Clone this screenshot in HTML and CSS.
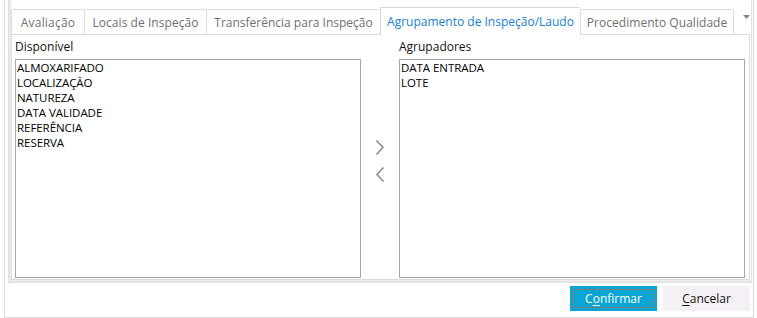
FILE: index.html
```html
<!DOCTYPE html>
<html lang="pt">
<head>
<meta charset="utf-8">
<title>Agrupamento</title>
<link rel="stylesheet" href="styles.css">
</head>
<body>
<div class="window">
  <div class="frame">
    <div class="tabs">
      <div class="tab">Avaliação</div>
      <div class="tab">Locais de Inspeção</div>
      <div class="tab">Transferência para Inspeção</div>
      <div class="tab active">Agrupamento de Inspeção/Laudo</div>
      <div class="tab">Procedimento Qualidade</div>
      <div class="tab-menu"><svg width="7" height="4" viewBox="0 0 7 4"><path d="M0 0H7L3.5 4Z" fill="#888"/></svg></div>
    </div>
    <div class="page">
      <div class="col">
        <div class="label">Disponível</div>
        <ul class="list">
          <li>ALMOXARIFADO</li>
          <li>LOCALIZAÇÃO</li>
          <li>NATUREZA</li>
          <li>DATA VALIDADE</li>
          <li>REFERÊNCIA</li>
          <li>RESERVA</li>
        </ul>
      </div>
      <div class="mover">
        <svg class="chev" width="10" height="17" viewBox="0 0 10 17"><path d="M1.5 1.5L8 8.5L1.5 15.5" fill="none" stroke="#8c8c8c" stroke-width="1.6"/></svg>
        <svg class="chev" width="10" height="17" viewBox="0 0 10 17"><path d="M8.5 1.5L2 8.5L8.5 15.5" fill="none" stroke="#8c8c8c" stroke-width="1.6"/></svg>
      </div>
      <div class="col">
        <div class="label">Agrupadores</div>
        <ul class="list">
          <li>DATA ENTRADA</li>
          <li>LOTE</li>
        </ul>
      </div>
    </div>
  </div>
  <div class="actions">
    <button class="btn primary"><span class="focus">C<u>o</u>nfirmar</span></button>
    <button class="btn secondary"><u>C</u>ancelar</button>
  </div>
</div>
</body>
</html>
```
FILE: styles.css
```css
html, body {
  margin: 0;
  padding: 0;
  background: #fff;
}
body {
  font-family: "Open Sans", "Noto Sans", sans-serif;
  color: #1a1a1a;
}
.window {
  margin-left: 4px;
  width: 750px;
  height: 318px;
  box-sizing: border-box;
  border: 1px solid #dedbe0;
  border-top: 0;
  display: flex;
  flex-direction: column;
}
.frame {
  margin-left: 3px;
  width: 744px;
  height: 283px;
  box-sizing: border-box;
  border: 1px solid #e2e2e2;
  border-top: 0;
  box-shadow: inset 1px -1px 0 #e6e6e6, inset 2px -2px 0 #ededed;
  padding: 7px 1px 2px 2px;
  display: flex;
  flex-direction: column;
}
.tabs {
  display: flex;
  align-items: flex-end;
  height: 27px;
  position: relative;
  z-index: 1;
}
.tab {
  height: 25px;
  box-sizing: border-box;
  border: 1px solid #dcdcdc;
  border-bottom: 0;
  border-right: 0;
  border-radius: 2px 2px 0 0;
  padding: 0;
  text-align: center;
  font-size: 12px;
  line-height: 25px;
  color: #707070;
  background: #fff;
  white-space: nowrap;
  letter-spacing: 0.05px;
}
.tab:nth-child(1) { width: 73px; letter-spacing: 0.2px; }
.tab:nth-child(2) { width: 122px; }
.tab:nth-child(3) { width: 174px; letter-spacing: 0; }
.tab:nth-child(5) { width: 154px; border-right: 1px solid #dcdcdc; }
.tab.active {
  width: 200px;
  height: 28px;
  margin-bottom: -1px;
  color: #1481d2;
  line-height: 27px;
  letter-spacing: 0;
  border-color: #d6d6d6;
}
.tab-menu {
  align-self: flex-start;
  margin: 6px 0 0 9px;
  line-height: 0;
}
.page {
  flex: 1;
  box-sizing: border-box;
  width: 739px;
  border: 1px solid #dcdcdc;
  padding: 3px 3px 1px 3px;
  display: grid;
  grid-template-columns: 346px 38px 346px;
}
.col {
  display: flex;
  flex-direction: column;
}
.label {
  font-size: 12px;
  line-height: 16px;
  height: 21px;
  padding-top: 1px;
  box-sizing: border-box;
  color: #111;
}
.list {
  flex: 1;
  margin: 0;
  padding: 0 0 0 1px;
  list-style: none;
  border: 1px solid #a6a6a6;
  font-size: 11.5px;
  line-height: 15px;
  color: #000;
  letter-spacing: -0.05px;
}
.mover {
  display: flex;
  flex-direction: column;
  align-items: center;
  padding-top: 101px;
  gap: 10px;
}
.actions {
  display: flex;
  justify-content: flex-end;
  gap: 6px;
  padding: 3px 3px 0 0;
}
.btn {
  width: 87px;
  height: 25px;
  border: 0;
  margin: 0;
  font-family: "Open Sans", "Noto Sans", sans-serif;
  font-size: 12px;
  padding: 0;
  display: flex;
  align-items: stretch;
  justify-content: center;
}
.btn u {
  text-underline-offset: 2px;
}
.primary {
  background: #0aa5d3;
  color: #fff;
  padding: 3px;
  box-sizing: border-box;
}
.focus {
  flex: 1;
  border: 1px dotted #ee5a24;
  display: flex;
  align-items: center;
  justify-content: center;
}
.secondary {
  background: #f5f0f5;
  color: #111;
  align-items: center;
}
```
